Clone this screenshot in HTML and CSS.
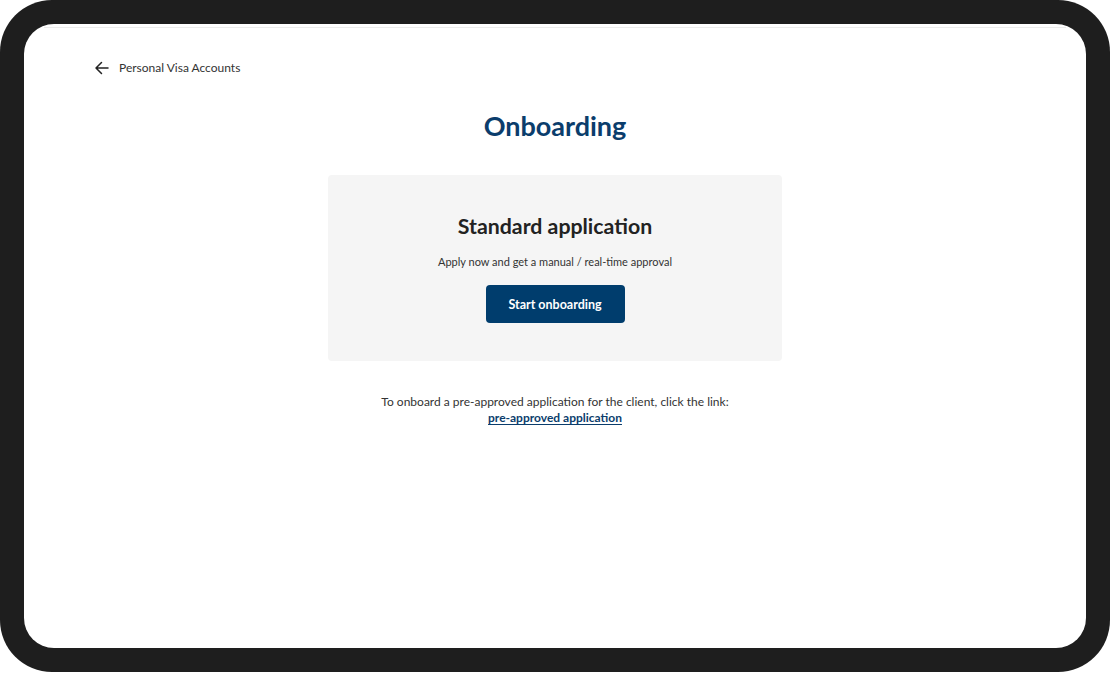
FILE: index.html
```html
<!DOCTYPE html>
<html lang="en">
<head>
<meta charset="utf-8">
<title>Onboarding</title>
<link rel="stylesheet" href="styles.css">
</head>
<body>
<div class="device">
  <div class="screen">
    <div class="topline"></div>
    <a class="back" href="#">
      <svg class="back-icon" width="16" height="16" viewBox="0 0 16 16" aria-hidden="true">
        <path d="M14 8H2.5M7.5 2.5L2 8l5.5 5.5" fill="none" stroke="#222" stroke-width="1.5" stroke-linecap="round" stroke-linejoin="round"/>
      </svg>
      <span>Personal Visa Accounts</span>
    </a>
    <h1 class="title">Onboarding</h1>
    <section class="card">
      <h2 class="card-title">Standard application</h2>
      <p class="card-text">Apply now and get a manual / real-time approval</p>
      <button class="btn" type="button">Start onboarding</button>
    </section>
    <p class="note">To onboard a pre-approved application for the client, click the link:<br><a class="link" href="#">pre-approved application</a></p>
  </div>
</div>
</body>
</html>
```

FILE: styles.css
```css
html, body {
  margin: 0;
  padding: 0;
  background: #ffffff;
}
body {
  font-family: Lato, "Open Sans", "Liberation Sans", sans-serif;
  color: #222;
}
.device {
  width: 1110px;
  height: 672px;
  box-sizing: border-box;
  background: #1e1e1e;
  border-radius: 52px;
  padding: 24px 24px 24px 24px;
}
.screen {
  height: 624px;
  background: #fff;
  border-radius: 30px;
  overflow: hidden;
  display: flex;
  flex-direction: column;
  align-items: center;
}
.topline {
  align-self: stretch;
  height: 3px;
  border-bottom: 1px solid #ececec;
  margin: 0 20px;
}
.back {
  align-self: flex-start;
  margin: 32px 0 0 70px;
  display: flex;
  align-items: center;
  gap: 9px;
  text-decoration: none;
  color: #333;
  font-size: 12px;
  line-height: 16px;
}
.back-icon { display: block; }
.title {
  margin: 32px 0 0;
  font-size: 27px;
  line-height: 36px;
  font-weight: 700;
  color: #0b3d6c;
}
.card {
  margin-top: 31px;
  width: 454px;
  height: 186px;
  box-sizing: border-box;
  background: #f5f5f5;
  border-radius: 4px;
  display: flex;
  flex-direction: column;
  align-items: center;
  padding-top: 36px;
}
.card-title {
  margin: 0;
  font-size: 21.3px;
  line-height: 30px;
  font-weight: 700;
  color: #222;
}
.card-text {
  margin: 14px 0 0;
  font-size: 11px;
  line-height: 14px;
  color: #333;
}
.btn {
  margin-top: 16px;
  width: 139px;
  height: 38px;
  border: none;
  border-radius: 4px;
  background: #003d6d;
  color: #fff;
  font-family: inherit;
  font-size: 12.5px;
  font-weight: 700;
}
.note {
  margin: 33px 0 0;
  text-align: center;
  font-size: 12px;
  line-height: 16px;
  color: #333;
}
.link {
  color: #0b3d6c;
  font-weight: 700;
  text-decoration: underline;
  text-underline-offset: 2px;
}
```
